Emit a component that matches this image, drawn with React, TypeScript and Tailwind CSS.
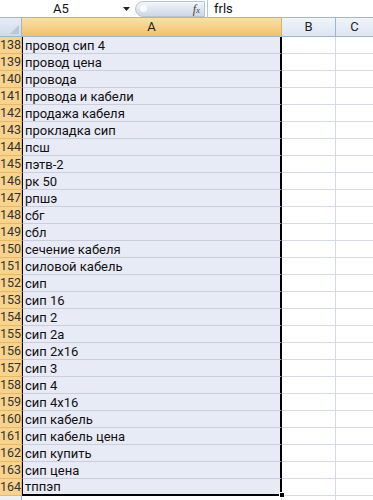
import React from "react";

const rows: [number, string][] = [
  [138, "провод сип 4"],
  [139, "провод цена"],
  [140, "провода"],
  [141, "провода и кабели"],
  [142, "продажа кабеля"],
  [143, "прокладка сип"],
  [144, "псш"],
  [145, "пэтв-2"],
  [146, "рк 50"],
  [147, "рпшэ"],
  [148, "сбг"],
  [149, "сбл"],
  [150, "сечение кабеля"],
  [151, "силовой кабель"],
  [152, "сип"],
  [153, "сип 16"],
  [154, "сип 2"],
  [155, "сип 2а"],
  [156, "сип 2х16"],
  [157, "сип 3"],
  [158, "сип 4"],
  [159, "сип 4х16"],
  [160, "сип кабель"],
  [161, "сип кабель цена"],
  [162, "сип купить"],
  [163, "сип цена"],
  [164, "тппэп"],
];

export default function App() {
  return (
    <div
      className="w-[373px] h-[500px] overflow-hidden bg-white text-[#111]"
      style={{ fontFamily: 'Roboto, "Liberation Sans", Arial, sans-serif' }}
    >
      {/* formula bar */}
      <div className="h-[18px] flex items-center border-b border-[#a7b5c9] bg-white relative">
        <div className="w-[118px] text-center text-[13px] leading-none pl-[4px]">A5</div>
        <div className="w-[16px] flex justify-center">
          <svg width="7" height="4" viewBox="0 0 7 4">
            <path d="M0 0H7L3.5 4Z" fill="#222" />
          </svg>
        </div>
        <div className="h-[16px] w-[70px] ml-[1px] rounded-l-full bg-gradient-to-b from-[#f4f7fb] via-[#dfe6ef] to-[#cdd8e6] border border-[#b7c4d6] flex items-center justify-end pr-[4px] relative">
          <div className="absolute left-[4px] top-[3px] w-[7px] h-[7px] rounded-full bg-white/80" />
          <span
            className="text-[12px] italic text-[#444]"
            style={{ fontFamily: '"Liberation Serif", serif' }}
          >
            f<span className="text-[9px]">x</span>
          </span>
        </div>
        <div className="w-px h-[18px] bg-[#b7c4d6] ml-[2px]" />
        <div className="pl-[6px] text-[13px] leading-none">frls</div>
      </div>
      {/* column headers */}
      <div className="h-[19px] flex border-b border-[#9eb6ce]">
        <div className="w-[22px] h-full bg-gradient-to-b from-[#e6edf6] to-[#cfdaea] border-r border-[#9eb6ce] relative">
          <svg className="absolute right-[2px] bottom-[2px]" width="9" height="9" viewBox="0 0 9 9">
            <path d="M9 0V9H0Z" fill="#b8c8dc" />
          </svg>
        </div>
        <div className="w-[260px] h-full bg-gradient-to-b from-[#fae0a8] to-[#f2c068] border-r border-[#e0b05c] flex items-center justify-center text-[13px] text-[#222]">
          A
        </div>
        <div className="w-[54px] h-full bg-gradient-to-b from-[#f1f5fb] to-[#dce5f1] border-r border-[#9eb6ce] flex items-center justify-center text-[13px] text-[#222]">
          B
        </div>
        <div className="flex-1 h-full bg-gradient-to-b from-[#f1f5fb] to-[#dce5f1] flex items-center justify-center text-[13px] text-[#222]">
          C
        </div>
      </div>
      {/* rows */}
      <div className="relative">
        {rows.map(([n, t], i) => {
          const last = i === rows.length - 1;
          return (
            <div key={n} className="h-[17px] flex">
              <div className="w-[22px] h-full bg-[#f8d38e] border-b border-[#e8b868] border-r border-[#e0b05c] flex items-center justify-center text-[12.5px] text-[#333]">
                {n}
              </div>
              <div
                className={
                  last
                    ? "w-[260px] h-full bg-[#e8eaf5] border-l border-l-black border-r-2 border-r-black border-b-2 border-b-black flex items-center pl-[2px] text-[13px] leading-none"
                    : "w-[260px] h-full bg-[#e8eaf5] border-l border-l-black border-r-2 border-r-black border-b border-b-[#c9cedd] flex items-center pl-[2px] text-[13px] leading-none"
                }
              >
                {t}
              </div>
              <div className="w-[54px] h-full border-b border-r border-[#d4d9e2]" />
              <div className="flex-1 h-full border-b border-[#d4d9e2]" />
            </div>
          );
        })}
        <div className="h-[17px] flex">
          <div className="w-[22px] h-full bg-gradient-to-b from-[#eef3f9] to-[#dde6f1] border-r border-[#9eb6ce]" />
          <div className="w-[260px] h-full border-r border-[#d4d9e2]" />
          <div className="w-[54px] h-full border-r border-[#d4d9e2]" />
          <div className="flex-1 h-full" />
        </div>
        <div className="absolute left-[279px] top-[455px] w-[6px] h-[6px] bg-black border border-white" />
      </div>
    </div>
  );
}
